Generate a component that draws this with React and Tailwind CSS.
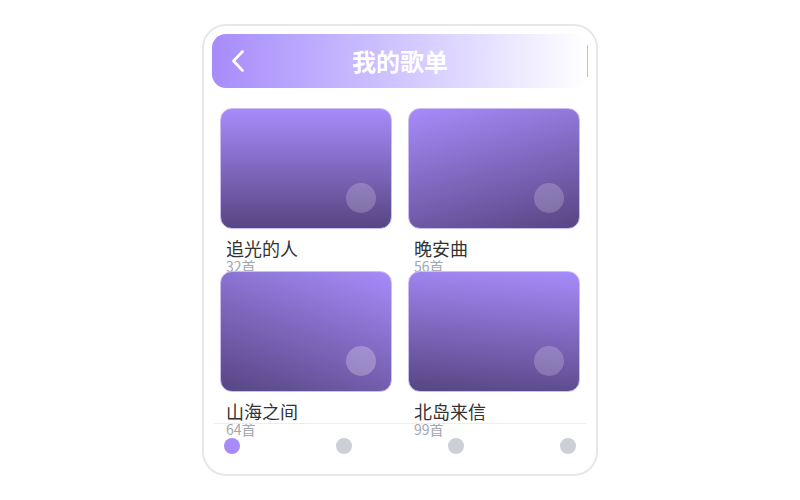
import React from "react";

const items = [
  { title: "追光的人", count: "32首", grad: "bg-[linear-gradient(180deg,#a78bfa_0%,#564683_100%)]", dot: "bg-white/20" },
  { title: "晚安曲", count: "56首", grad: "bg-[linear-gradient(165deg,#a78bfa_0%,#564683_100%)]", dot: "bg-white/20" },
  { title: "山海之间", count: "64首", grad: "bg-[linear-gradient(200deg,#a78bfa_0%,#564683_100%)]", dot: "bg-white/25" },
  { title: "北岛来信", count: "99首", grad: "bg-[linear-gradient(185deg,#a78bfa_0%,#564683_100%)]", dot: "bg-white/20" },
];

export default function App() {
  return (
    <div
      className="w-[800px] h-[500px] bg-white flex items-center justify-center"
      style={{ fontFamily: '"Noto Sans CJK SC", "Noto Sans", sans-serif' }}
    >
      <div className="w-[396px] h-[452px] border-2 border-[#e6e7eb] rounded-[24px] p-2 flex flex-col">
        <div className="h-[54px] shrink-0 rounded-[14px] bg-gradient-to-r from-[#a78bfa] to-white grid grid-cols-[1fr_auto_1fr] items-center px-5">
          <svg width="12" height="22" viewBox="0 0 12 22" fill="none">
            <path d="M10.5 1.5 L1.5 11 L10.5 20.5" stroke="white" strokeWidth="2.6" strokeLinecap="round" strokeLinejoin="round" />
          </svg>
          <div className="text-white text-[24px] font-bold leading-[30px]">我的歌单</div>
          <div className="justify-self-end mr-[-20px] w-px h-[32px] bg-violet-300" />
        </div>
        <div className="flex-1 min-h-0 px-2 pt-5">
          <div className="grid grid-cols-2 gap-x-4 gap-y-4 auto-rows-[147px]">
            {items.map((it) => (
              <div key={it.title} className="flex flex-col">
                <div className={`h-[121px] shrink-0 rounded-[12px] border border-[#c9bdf5] ${it.grad} flex items-end justify-end p-[15px]`}>
                  <div className={`w-[30px] h-[30px] rounded-full ${it.dot}`} />
                </div>
                <div className="mt-2 shrink-0 px-[6px] text-[18px] leading-[22px] text-[#333333]">{it.title}</div>
                <div className="shrink-0 px-[6px] text-[14px] leading-[14px] text-[#a3a6ad]">{it.count}</div>
              </div>
            ))}
          </div>
        </div>
        <div className="h-[43px] shrink-0 mx-[2px] border-t border-[#eceef2] pt-[14px] px-[10px] flex justify-between items-start">
          <div className="w-4 h-4 rounded-full bg-[#a78bfa]" />
          <div className="w-4 h-4 rounded-full bg-[#cbcfd6]" />
          <div className="w-4 h-4 rounded-full bg-[#cbcfd6]" />
          <div className="w-4 h-4 rounded-full bg-[#cbcfd6]" />
        </div>
      </div>
    </div>
  );
}
